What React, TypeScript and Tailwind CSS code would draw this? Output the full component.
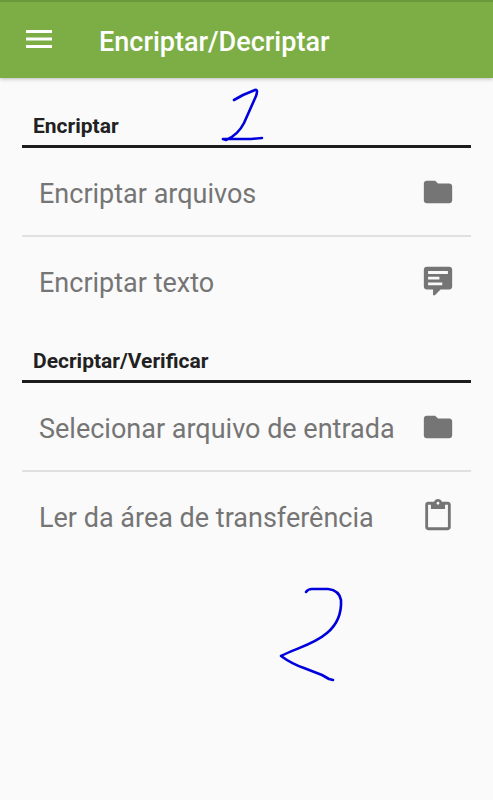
import type { ReactNode } from 'react';

function Icon({ children }: { children: ReactNode }) {
  return (
    <svg viewBox="0 0 24 24" className="size-[34px] shrink-0" fill="currentColor" aria-hidden="true">
      {children}
    </svg>
  );
}

const FolderIcon = () => (
  <Icon>
    <path d="M10 4H4c-1.1 0-1.99.9-1.99 2L2 18c0 1.1.9 2 2 2h16c1.1 0 2-.9 2-2V8c0-1.1-.9-2-2-2h-8l-2-2z" />
  </Icon>
);

const MessageIcon = () => (
  <Icon>
    <path
      fillRule="evenodd"
      d="M4 2h16c1.1 0 2 .9 2 2v12c0 1.1-.9 2-2 2h-6.2l-4 4H8.500v-4H4c-1.1 0-2-.9-2-2V4c0-1.1.9-2 2-2zM5 5v2h14V5zM5 9v2h8V9zM5 13v2h10v-2z"
    />
  </Icon>
);

const ClipboardIcon = () => (
  <Icon>
    <path d="M19 2h-4.18C14.4.84 13.3 0 12 0c-1.3 0-2.4.84-2.82 2H5c-1.1 0-2 .9-2 2v16c0 1.1.9 2 2 2h14c1.1 0 2-.9 2-2V4c0-1.1-.9-2-2-2zm-7 0c.55 0 1 .45 1 1s-.45 1-1 1-1-.45-1-1 .45-1 1-1zm7 18H5V4h2v3h10V4h2v16z" />
  </Icon>
);

function Row({ label, icon }: { label: string; icon: ReactNode }) {
  return (
    <li>
      <button type="button" className="flex h-[87px] w-full items-center justify-between pr-4 pl-[17px] text-left text-[27px] leading-8 whitespace-nowrap text-[#757575]">
        <span className="pt-1">{label}</span>
        {icon}
      </button>
    </li>
  );
}

function Section({ title, children }: { title: string; children: ReactNode }) {
  return (
    <section>
      <h2 className="border-b-3 border-[#1c1c1c] px-[11px] pb-[7px] text-[21px] leading-6 font-bold text-[#212121]">{title}</h2>
      <ul className="divide-y-2 divide-[#e0e0e0]">{children}</ul>
    </section>
  );
}

export default function App() {
  return (
    <div className="relative min-h-screen bg-[#fafafa] font-['Roboto',sans-serif]">
      <header className="flex h-[78px] items-center border-t-2 border-[#6b983d] bg-[#7cae45] px-[22px] text-white shadow-[0_1px_4px_rgba(0,0,0,0.25)]">
        <button type="button" aria-label="Menu" className="mr-[43px]">
          <svg viewBox="0 0 34 34" className="size-[34px]" fill="currentColor" aria-hidden="true">
            <path d="M4 7h26v3H4zM4 14.500h26v3H4zM4 22h26v3H4z" />
          </svg>
        </button>
        <h1 className="pt-1 text-[27px] leading-8 font-medium">Encriptar/Decriptar</h1>
      </header>
      <main className="flex flex-col gap-[25px] px-[22px] pt-9">
        <Section title="Encriptar">
          <Row label="Encriptar arquivos" icon={<FolderIcon />} />
          <Row label="Encriptar texto" icon={<MessageIcon />} />
        </Section>
        <Section title="Decriptar/Verificar">
          <Row label="Selecionar arquivo de entrada" icon={<FolderIcon />} />
          <Row label="Ler da área de transferência" icon={<ClipboardIcon />} />
        </Section>
      </main>
      <svg
        viewBox="0 0 130 600"
        className="pointer-events-none absolute top-[85px] left-[216px] h-[600px] w-[130px]"
        fill="none"
        stroke="#0000dc"
        strokeWidth="2.6"
        strokeLinecap="round"
        strokeLinejoin="round"
        aria-hidden="true"
      >
        <path d="M18 15L27 10L39 5C42 4 41 8 40 11L28 38Q22 50 10 55L7 54H35L46 53" />
        <path d="M90 507Q92 504 96 504H112C120 505 124 509 125 515C126 534 117 543 111 548C97 560 80 563 65 571Q76 579 88 583L106 590L113 594L117 595" />
      </svg>
    </div>
  );
}
